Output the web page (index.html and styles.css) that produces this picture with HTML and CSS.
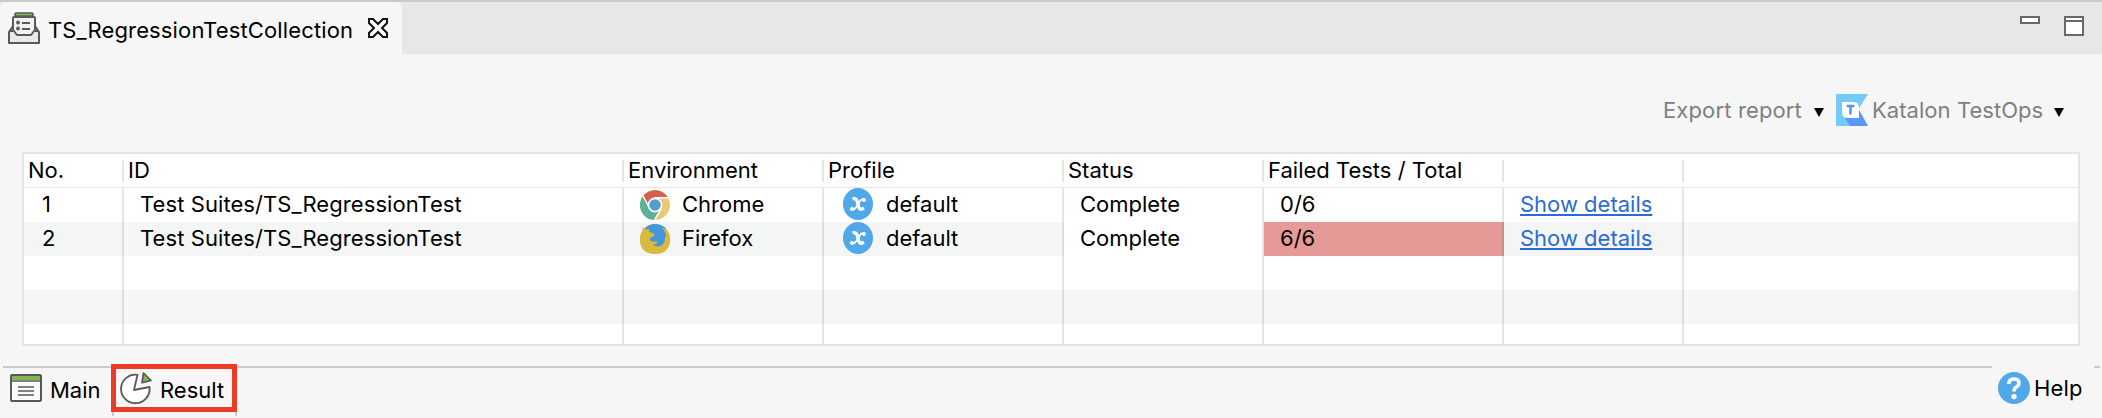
FILE: index.html
```html
<!DOCTYPE html>
<html lang="en">
<head>
<meta charset="utf-8">
<title>TS_RegressionTestCollection</title>
<link rel="stylesheet" href="styles.css">
</head>
<body>
<svg class="defs" width="0" height="0" aria-hidden="true">
  <symbol id="variable" viewBox="0 0 30 32">
    <ellipse cx="15" cy="16" rx="15" ry="16" fill="#51a8e9"/>
    <path d="M9.500 10.800Q13.200 9.800 14.200 13.300L15.900 19.300Q16.700 22.600 21 20.300" fill="none" stroke="#fff" stroke-width="3.300"/>
    <path d="M21.500 11.600Q18.600 10.200 16.200 14.200L13.600 18.700Q11.300 22.300 8.500 21.300" fill="none" stroke="#fff" stroke-width="1.900"/>
    <circle cx="21" cy="12" r="1.900" fill="#fff"/><circle cx="9" cy="21" r="2" fill="#fff"/>
  </symbol>
</svg>
<div class="window">
  <header class="tabbar">
    <div class="tab">
      <svg class="tab-icon" width="32" height="32" viewBox="0 0 32 32">
        <path d="M5 14 1 20V31H31V20L27 14" fill="#e9e9e9" stroke="#5a5a5a" stroke-width="2" stroke-linejoin="round"/>
        <path d="M5 19V6Q5 5 6 5H26Q27 5 27 6V19L23 23H9Z" fill="#f2f2f2"/>
        <path d="M5 19V6Q5 5 6 5H26Q27 5 27 6V19M1 19H6L9 23H23L26 19H31" fill="none" stroke="#5a5a5a" stroke-width="2" stroke-linejoin="round"/>
        <path d="M7 4V2Q7 1 8 1H24Q25 1 25 2V4Z" fill="#82b750" stroke="#5a5a5a" stroke-width="1.600"/>
        <circle cx="10" cy="10.500" r="1.900" fill="#5a5a5a"/><circle cx="10" cy="16.500" r="1.900" fill="#5a5a5a"/>
        <path d="M14 11H22M14 17H22" stroke="#5a5a5a" stroke-width="2"/>
      </svg>
      <span class="tab-title">TS_RegressionTestCollection</span>
      <svg class="close" width="20" height="20" viewBox="0 0 20 20"><path d="M1 1H5L10 6 15 1H19V5L14 10 19 15V19H15L10 14 5 19H1V15L6 10 1 5Z" fill="#fff" stroke="#111" stroke-width="2"/></svg>
    </div>
    <div class="window-controls">
      <svg width="20" height="8" viewBox="0 0 20 8"><rect x="1" y="1" width="18" height="6" fill="#fff" stroke="#696969" stroke-width="2"/></svg>
      <svg width="20" height="20" viewBox="0 0 20 20"><path d="M1 1H19V19H1ZM1 5H19" fill="#fff" stroke="#696969" stroke-width="2"/></svg>
    </div>
  </header>
  <div class="toolbar">
    <span class="export">Export report</span>
    <svg class="arrow" width="10" height="9" viewBox="0 0 10 9"><path d="M0 0H10L5 9Z"/></svg>
    <svg class="testops" width="32" height="32" viewBox="0 0 32 32">
      <path d="M0 0H32L22 16 15 32H0Z" fill="#75cafa"/>
      <path d="M8.500 23 22 14 32 32H14Z" fill="#5b96fa"/>
      <path d="M6 8H17Q23 8 23 14V24H12Q6 24 6 18Z" fill="#fff"/>
      <path d="M10.500 12H18.500M14.500 12V20.500" stroke="#5b91e8" stroke-width="2.500"/>
    </svg>
    <span class="katalon">Katalon TestOps</span>
    <svg class="arrow" width="10" height="9" viewBox="0 0 10 9"><path d="M0 0H10L5 9Z"/></svg>
  </div>
  <main class="table">
    <div class="row head">
      <div><span>No.</span></div><div><span>ID</span></div><div><span>Environment</span></div><div><span>Profile</span></div><div><span>Status</span></div><div><span>Failed Tests / Total</span></div><div></div><div></div>
    </div>
    <div class="row">
      <div class="num">1</div><div class="suite">Test Suites/TS_RegressionTest</div>
      <div class="browser">
        <svg width="30" height="30" viewBox="0 0 30 30">
          <circle cx="15" cy="15" r="15" fill="#ebc970"/>
          <path d="M2.800 6.300A15 15 0 0 1 27.500 7H15L8.500 18Z" fill="#d65f51"/>
          <path d="M2.800 6.300A15 15 0 0 0 14.500 30L22 18 8.500 18Z" fill="#5fb09b"/>
          <path d="M3 6 9.200 17M14.500 7.700H29M21.500 18.500 14.500 30" stroke="#fff" stroke-width="1.500"/>
          <circle cx="15" cy="15" r="6.600" fill="#519fcd" stroke="#fff" stroke-width="1.700"/>
        </svg><span>Chrome</span></div>
      <div class="profile"><svg width="30" height="32"><use href="#variable"/></svg><span>default</span></div>
      <div class="state"><span>Complete</span></div><div class="count">0/6</div><div class="link"><a>Show details</a></div><div></div>
    </div>
    <div class="row striped">
      <div class="num">2</div><div class="suite">Test Suites/TS_RegressionTest</div>
      <div class="browser">
        <svg width="30" height="30" viewBox="0 0 30 30">
          <circle cx="15" cy="15" r="15" fill="#dbb93e"/>
          <path d="M4.500 4.500Q9 0 15 0 22 0 26 4.500L26 17Q23.500 23.500 15.500 23.500L9 20 9.500 9Z" fill="#4596d8"/>
          <path d="M2.500 3 5.500 5.500 9 5 9.500 8 14 9.500 14 12 10.500 13.500 9.500 16 12 17.500 17.500 17.500 17 19.500 12.500 21 17 22.500Q22 22 24.500 18L25 14 26 11 25 8 22 3 27 6Q30 10 30 15 30 30 15 30 0 30 0 15 0 10 2.500 8Z" fill="#dbb93e"/>
        </svg><span>Firefox</span></div>
      <div class="profile"><svg width="30" height="32"><use href="#variable"/></svg><span>default</span></div>
      <div class="state"><span>Complete</span></div><div class="count failed">6/6</div><div class="link"><a>Show details</a></div><div></div>
    </div>
    <div class="row"><div></div><div></div><div></div><div></div><div></div><div></div><div></div><div></div></div>
    <div class="row striped"><div></div><div></div><div></div><div></div><div></div><div></div><div></div><div></div></div>
    <div class="row last"><div></div><div></div><div></div><div></div><div></div><div></div><div></div><div></div></div>
  </main>
  <footer class="footer">
    <div class="rule"><i></i><i></i></div>
    <div class="main-tab">
      <svg width="32" height="28" viewBox="0 0 32 28"><rect x="1" y="1" width="30" height="26" rx="1" fill="#fafafa" stroke="#595959" stroke-width="2"/><path d="M2 2H30V6H2Z" fill="#82b750"/><path d="M1 7H31M8 13H24M8 17H24M8 21H24" stroke="#595959" stroke-width="1.700"/></svg>
      <span>Main</span>
    </div>
    <div class="result-tab">
      <div class="highlight">
        <svg width="32" height="33" viewBox="0 0 32 33"><path d="M17.500 2.800A14.300 14.300 0 1 0 29.500 15L14 18Z" fill="#fff" stroke="#595959" stroke-width="1.800" stroke-linejoin="round"/><path d="M23.500 1 31 8.500 22 10.800Z" fill="#82b750" stroke="#595959" stroke-width="1.700" stroke-linejoin="round"/></svg>
        <span>Result</span>
      </div>
      <div class="tab-feet"></div>
    </div>
    <div class="help">
      <svg width="32" height="32" viewBox="0 0 32 32"><circle cx="16" cy="16" r="16" fill="#51a8e9"/><path d="M10.800 12Q10.800 7 16 7 21 7 21 11 21 13.500 18 15.200 16 16.500 16 19.500" fill="none" stroke="#fff" stroke-width="3.600"/><circle cx="16" cy="24.600" r="2.700" fill="#fff"/></svg>
      <span>Help</span>
    </div>
  </footer>
</div>
</body>
</html>
```
FILE: styles.css
```css
* { box-sizing: border-box; }
body { margin: 0; background: #f6f6f6; color: #000; font: 22px/26px Inter, "Liberation Sans", sans-serif; }
svg { display: block; flex: none; }
span, a { white-space: nowrap; }
.defs { position: absolute; }
.window { width: 2102px; height: 418px; overflow: hidden; display: flex; flex-direction: column; }
.tabbar { height: 54px; flex: none; border-top: 2px solid #cacaca; background: #e7e7e7; display: flex; justify-content: space-between; }
.tab { width: 402px; height: 52px; background: #f6f6f6; border-radius: 5px 5px 0 0; padding: 10px 0 0 8px; display: flex; align-items: flex-start; }
.tab-title { width: 304px; margin: 5px 0 0 8px; letter-spacing: .14px; }
.close { margin: 6px 0 0 16px; }
.window-controls { display: flex; align-items: flex-start; gap: 24px; padding: 14px 18px 0 0; }
.toolbar { height: 98px; flex: none; display: flex; align-items: center; justify-content: flex-end; padding: 14px 38px 0 0; color: #808080; }
.export { width: 141px; margin-right: 10px; letter-spacing: .14px; }
.katalon { width: 172px; margin: 0 10px 0 4px; letter-spacing: .05px; }
.testops { margin-left: 12px; }
.arrow { margin-top: 4px; fill: #000; }
.table { margin: 0 22px; width: 2058px; height: 194px; flex: none; border: 2px solid #e4e4e4; background: #fff; overflow: hidden; }
.row { display: grid; grid-template-columns: 100px 500px 200px 240px 200px 240px 180px 1fr; height: 34px; }
.row > div { border-right: 2px solid rgba(0, 0, 0, .1); display: flex; align-items: center; padding-bottom: 2px; }
.row > div:last-child { border-right: 0; }
.head { border-bottom: 1px solid #e4e4e4; padding: 6px 0 5px; line-height: 20px; }
.row.head > div { padding: 0 0 2px 4px; }
.striped { background: #f4f5f5; }
.last { height: 20px; }
.row > .num { padding-left: 18px; }
.row > .suite { padding-left: 16px; letter-spacing: .08px; }
.row > .browser { padding: 0 0 0 16px; }
.browser span { margin: -2px 0 0 12px; }
.row > .profile { padding: 0 0 2px 19px; }
.profile span { margin-left: 13px; }
.row > .state { padding-left: 16px; }
.striped > .state { background: #fff; }
.row > .count { padding-left: 16px; }
.row > .failed { background: #e59a97; }
.row > .link { padding-left: 16px; }
.link a { color: #2b6bd6; text-decoration: underline; text-decoration-thickness: 2px; text-underline-offset: 2px; text-decoration-skip-ink: none; }
.footer { margin-top: 20px; height: 52px; display: grid; grid-template-columns: 111px 126px 1fr auto; }
.rule { grid-area: 1 / 1 / 2 / 5; height: 2px; display: flex; justify-content: space-between; padding: 0 2px 0 3px; }
.rule i { height: 2px; width: 1989px; background: #cacaca; }
.rule i:last-child { width: 6px; }
.main-tab { grid-area: 1 / 1; display: flex; padding: 8px 0 0 10px; }
.main-tab span { margin: 3px 0 0 8px; }
.result-tab { grid-area: 1 / 2; margin-top: -2px; }
.highlight { height: 48px; border: 5px solid #ed3c25; background: #f6f6f6; display: flex; padding: 3px 0 0 4px; }
.highlight span { margin: 5px 0 0 8px; }
.tab-feet { height: 4px; margin: 0 0 0 1px; border: 2px solid #cacaca; border-width: 0 2px; }
.help { grid-area: 1 / 4; display: flex; width: 104px; padding-top: 6px; }
.help span { margin: 3px 0 0 4px; letter-spacing: .2px; }
```
